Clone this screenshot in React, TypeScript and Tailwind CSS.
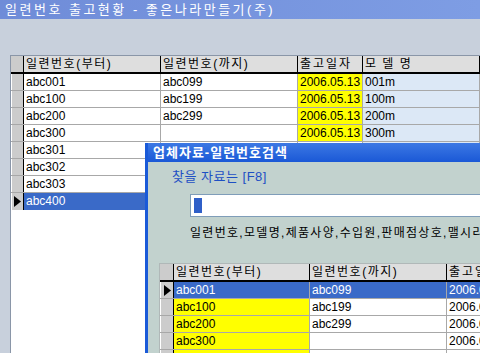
import React from "react";

const FONT = { fontFamily: '"Liberation Sans", "Noto Sans CJK KR", sans-serif' };

type Cell = { text: string; bg?: string };

const mainRows: Cell[][] = [
  [{ text: "abc001" }, { text: "abc099" }, { text: "2006.05.13", bg: "bg-[#ffff00]" }, { text: "001m" }],
  [{ text: "abc100" }, { text: "abc199" }, { text: "2006.05.13", bg: "bg-[#ffff00]" }, { text: "100m" }],
  [{ text: "abc200" }, { text: "abc299" }, { text: "2006.05.13", bg: "bg-[#ffff00]" }, { text: "200m" }],
  [{ text: "abc300" }, { text: "" }, { text: "2006.05.13", bg: "bg-[#ffff00]" }, { text: "300m" }],
  [{ text: "abc301" }, { text: "" }, { text: "" }, { text: "" }],
  [{ text: "abc302" }, { text: "" }, { text: "" }, { text: "" }],
  [{ text: "abc303" }, { text: "" }, { text: "" }, { text: "" }],
];

const mainWidths = ["w-[137px]", "w-[137px]", "w-[65px]", "flex-1"];
const mainHeads = [
  { t: "일련번호(부터)", k: "tracking-[1.5px]" },
  { t: "일련번호(까지)", k: "tracking-[1.5px]" },
  { t: "출고일자", k: "tracking-[2px]" },
  { t: "모 델 명", k: "tracking-[1.5px]" },
];

function Arrow() {
  return (
    <svg width="7" height="11" viewBox="0 0 7 11">
      <path d="M0 0 L7 5.5 L0 11 Z" fill="#000" />
    </svg>
  );
}

function Selector({ active, w = "w-[13px]" }: { active?: boolean; w?: string }) {
  return (
    <div
      className={`${w} shrink-0 h-full bg-[#cccccc] border-r border-black border-l border-l-white flex items-center justify-center`}
    >
      {active && <Arrow />}
    </div>
  );
}

function MainGrid() {
  return (
    <div className="ml-[10px] mt-[36px] flex-1 bg-white border-l border-t border-[#8a96a8] flex flex-col">
      {/* header */}
      <div className="flex h-[18px] shrink-0 border-b-2 border-black bg-[#dedede] text-[12px] text-black">
        <div className="w-[13px] shrink-0 bg-[#cccccc] border-r border-black" />
        {mainHeads.map((h, i) => (
          <div
            key={i}
            className={`${mainWidths[i]} ${h.k} shrink-0 border-r border-black pl-[2px] leading-[16px] whitespace-nowrap overflow-hidden`}
          >
            {h.t}
          </div>
        ))}
      </div>
      {mainRows.map((row, r) => (
        <div key={r} className="flex h-[17px] shrink-0 border-b border-[#a8a8a8] text-[12px] text-black">
          <Selector />
          {row.map((c, i) => (
            <div
              key={i}
              className={`${mainWidths[i]} shrink-0 border-r border-[#a8a8a8] pl-[2px] leading-[16px] whitespace-nowrap overflow-hidden ${
                c.bg ?? (i === 3 ? "bg-[#dce8f6]" : "")
              }`}
            >
              {c.text}
            </div>
          ))}
        </div>
      ))}
      <div className="flex h-[17px] shrink-0 text-[12px]">
        <Selector active />
        <div className="w-[137px] shrink-0 bg-[#3a6ac8] text-white pl-[2px] leading-[16px]">abc400</div>
        <div className="flex-1" />
      </div>
    </div>
  );
}

const subRows: { c: Cell[]; sel?: boolean }[] = [
  { c: [{ text: "abc001" }, { text: "abc099" }, { text: "2006.05.13" }], sel: true },
  { c: [{ text: "abc100", bg: "bg-[#ffff00]" }, { text: "abc199" }, { text: "2006.05.13" }] },
  { c: [{ text: "abc200", bg: "bg-[#ffff00]" }, { text: "abc299" }, { text: "2006.05.13" }] },
  { c: [{ text: "abc300", bg: "bg-[#ffff00]" }, { text: "" }, { text: "2006.05.13" }] },
  { c: [{ text: "abc301", bg: "bg-[#ffff00]" }, { text: "" }, { text: "2006.05.13" }] },
];

const subWidths = ["w-[136px]", "w-[137px]", "flex-1"];

function Dialog() {
  return (
    <div className="absolute left-[145px] top-[143px] w-[340px] h-[240px] border-l-[3px] border-[#1a5ad8] bg-[#c2d2ce] flex flex-col">
      <div className="h-[19px] shrink-0 bg-gradient-to-b from-[#3c78e4] to-[#1a58d6] text-white font-bold text-[13px] tracking-[1px] leading-[19px] pl-[5px] whitespace-nowrap">
        업체자료-일련번호검색
      </div>
      <div className="pl-[24px] mt-[7px] shrink-0 text-[13px] tracking-[0.5px] leading-[16px] text-[#1d4fc4] whitespace-nowrap">
        찾을 자료는 [F8]
      </div>
      <div className="ml-[42px] mt-[9px] h-[23px] shrink-0 bg-white border border-[#7f9db9] flex items-center pl-[3px]">
        <div className="w-[8px] h-[15px] bg-[#2f5fc8]" />
      </div>
      <div className="ml-[42px] mt-[8px] shrink-0 text-[12px] tracking-[1.3px] leading-[16px] text-black whitespace-nowrap overflow-hidden">
        일련번호,모델명,제품사양,수입원,판매점상호,맬시리얼
      </div>
      <div className="ml-[11px] mt-[22px] flex-1 bg-white border-l border-t border-[#b0b8b8] flex flex-col">
        <div className="flex h-[18px] shrink-0 border-b-2 border-black bg-[#dedede] text-[12px] text-black">
          <div className="w-[14px] shrink-0 bg-[#cccccc] border-r border-black" />
          {["일련번호(부터)", "일련번호(까지)", "출고일자"].map((h, i) => (
            <div
              key={i}
              className={`${subWidths[i]} ${i === 2 ? "tracking-[2px]" : "tracking-[1.5px]"} shrink-0 border-r border-black pl-[2px] leading-[16px] whitespace-nowrap overflow-hidden`}
            >
              {h}
            </div>
          ))}
        </div>
        {subRows.map((row, r) => (
          <div key={r} className="flex h-[17px] shrink-0 border-b border-[#a8a8a8] text-[12px] text-black">
            <Selector active={row.sel} w="w-[14px]" />
            {row.c.map((c, i) => (
              <div
                key={i}
                className={`${subWidths[i]} shrink-0 border-r border-[#a8a8a8] pl-[2px] leading-[16px] whitespace-nowrap overflow-hidden ${
                  row.sel ? "bg-[#3a6ac8] text-white" : c.bg ?? ""
                }`}
              >
                {c.text}
              </div>
            ))}
          </div>
        ))}
      </div>
    </div>
  );
}

export default function App() {
  return (
    <div className="relative w-[480px] h-[353px] overflow-hidden bg-[#c8d0dc] flex flex-col" style={FONT}>
      <div className="h-[19px] shrink-0 bg-gradient-to-r from-[#6f8cd8] to-[#7e9de4] text-white text-[13px] tracking-[2.5px] leading-[19px] pl-[5px] whitespace-nowrap">
        일련번호 출고현황 - 좋은나라만들기(주)
      </div>
      <MainGrid />
      <Dialog />
    </div>
  );
}
